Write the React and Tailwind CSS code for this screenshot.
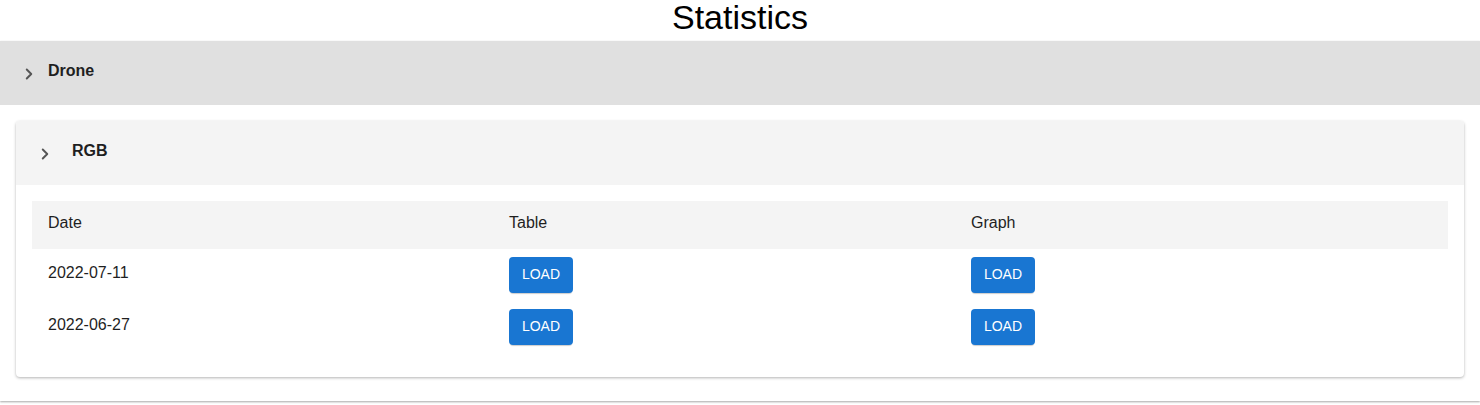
import { ChevronRight } from "lucide-react";

const rows = ["2022-07-11", "2022-06-27"];

const LoadButton = () => (
  <button className="h-9 w-16 rounded bg-[#1976d2] pb-0.5 text-sm uppercase text-white shadow-[0_2px_1px_-1px_rgba(0,0,0,0.2)]">
    Load
  </button>
);

export default function App() {
  return (
    <div className="min-h-[405px] bg-white font-['Liberation_Sans',Arial,sans-serif] text-[#1f1f1f]">
      <h1 className="h-[41px] text-center text-[34px] leading-[34px] text-black">Statistics</h1>

      {/* Drone accordion */}
      <div className="shadow-[0_1px_2px_rgba(0,0,0,0.35)]">
        <div className="flex h-16 items-center bg-[#e0e0e0] pb-1 pl-[20px]">
          <ChevronRight className="mt-1.5 h-[18px] w-[18px] text-[#555]" strokeWidth={2.6} />
          <span className="ml-[10px] text-base font-bold">Drone</span>
        </div>

        <div className="px-4 pb-6 pt-4">
          {/* RGB card */}
          <div className="overflow-hidden rounded shadow-[0_1px_3px_rgba(0,0,0,0.3)]">
            <div className="flex h-16 items-center bg-[#f4f4f4] pb-1 pl-[20px]">
              <ChevronRight className="mt-1.5 h-[18px] w-[18px] text-[#555]" strokeWidth={2.6} />
              <span className="ml-[18px] text-base font-bold">RGB</span>
            </div>

            <div className="px-4 pb-6 pt-4">
              <div className="grid h-12 grid-cols-[461px_462px_1fr] items-center bg-[#f4f4f4] pb-1 text-base">
                <div className="pl-4">Date</div>
                <div className="pl-4">Table</div>
                <div className="pl-4">Graph</div>
              </div>
              {rows.map((d) => (
                <div key={d} className="grid h-[52px] grid-cols-[461px_462px_1fr] items-center text-base">
                  <div className="pb-1 pl-4">{d}</div>
                  <div className="pl-4">
                    <LoadButton />
                  </div>
                  <div className="pl-4">
                    <LoadButton />
                  </div>
                </div>
              ))}
            </div>
          </div>
        </div>
      </div>
    </div>
  );
}
